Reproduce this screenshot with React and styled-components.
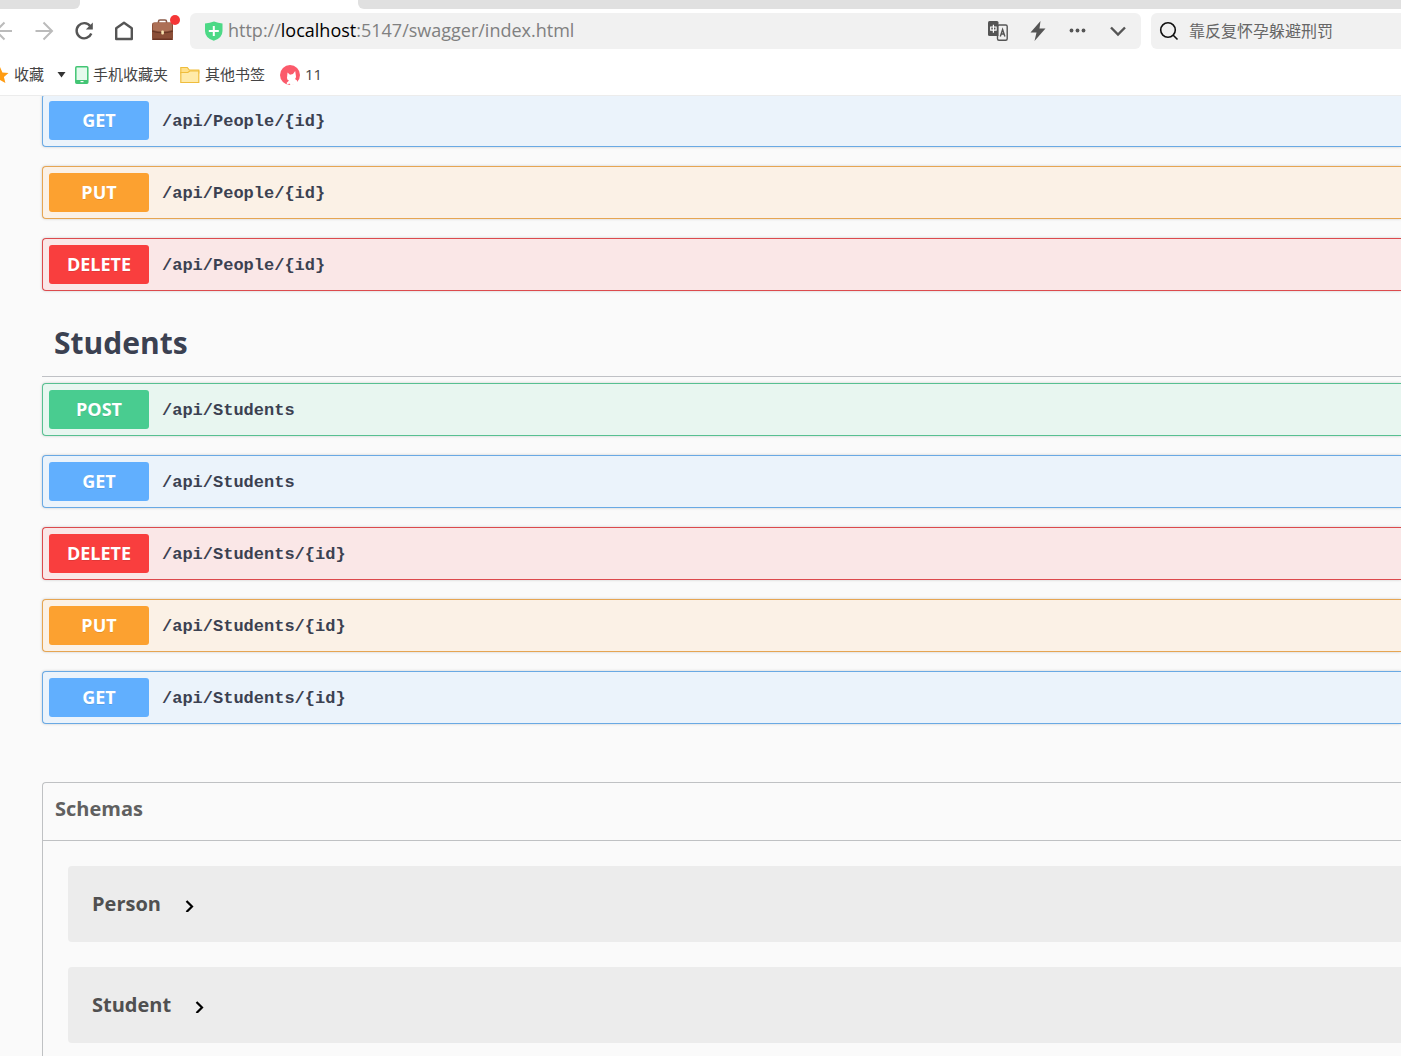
import React from "react";
import styled, { createGlobalStyle } from "styled-components";

const GlobalStyle = createGlobalStyle`
  * {
    box-sizing: border-box;
  }

  body {
    margin: 0;
    background-color: #fafafa;
    font-family: "Open Sans", "Noto Sans CJK SC", sans-serif;
    color: #3b4151;
  }

  button,
  input {
    font-family: inherit;
  }
`;

const Page = styled.div`
  display: flex;
  flex-direction: column;
  min-height: 100vh;
  overflow: hidden;
`;

// Browser chrome
const Browser = styled.header`
  position: relative;
  z-index: 1;
  background-color: #fff;
  border-bottom: 1px solid #ececec;
`;

const TabStrip = styled.div`
  display: flex;
  justify-content: space-between;
  height: 9px;
`;

const InactiveTab = styled.div`
  width: 80px;
  background-color: #e0e0e0;
  border-bottom-right-radius: 6px;
`;

const TabRest = styled.div`
  flex: 1;
  margin-left: 278px;
  background-color: #e0e0e0;
  border-bottom-left-radius: 6px;
`;

const Toolbar = styled.div`
  display: flex;
  align-items: center;
  padding-top: 4px;
`;

const Nav = styled.nav`
  display: flex;
  margin-left: -16px;
  margin-right: 6px;
`;

const IconButton = styled.button`
  display: flex;
  align-items: center;
  justify-content: center;
  width: 40px;
  height: 36px;
  padding: 0;
  border: none;
  background: none;
  color: ${(props) => props.$color || "#555"};
  cursor: pointer;
`;

const AddressBar = styled.div`
  display: flex;
  flex: 1;
  align-items: center;
  height: 36px;
  padding: 0 3px 0 14px;
  border-radius: 6px;
  background-color: #f1f1f1;
`;

const Url = styled.div`
  flex: 1;
  margin-left: 4px;
  padding-bottom: 2px;
  font-size: 18px;
  line-height: 24px;
  color: #808080;
  white-space: nowrap;
  outline: none;
`;

const Host = styled.span`
  color: #000;
`;

const SearchBar = styled.label`
  display: flex;
  align-items: center;
  gap: 10px;
  width: 250px;
  height: 36px;
  margin-left: 10px;
  padding-left: 8px;
  border-radius: 6px 0 0 6px;
  background-color: #f1f1f1;
`;

const SearchInput = styled.input`
  flex: 1;
  min-width: 0;
  padding: 0;
  border: none;
  outline: none;
  background: none;
  font-size: 16px;

  &::placeholder {
    color: #666;
  }
`;

const Bookmarks = styled.div`
  display: flex;
  align-items: center;
  height: 46px;
  padding-top: 5px;
`;

const Bookmark = styled.a`
  display: flex;
  align-items: center;
  gap: ${(props) => props.$gap || 5}px;
  margin-right: ${(props) => props.$after || 0}px;
  font-size: 15px;
  line-height: 20px;
  color: #444;
  text-decoration: none;
  white-space: nowrap;

  &:first-child {
    margin-left: -9px;
  }
`;

const BookmarkLabel = styled.span`
  padding-bottom: 2px;
`;

const MenuArrow = styled.button`
  display: flex;
  margin-right: 9px;
  padding: 0;
  border: none;
  background: none;
`;

// Swagger page
const Content = styled.main`
  display: flex;
  flex: 1;
  flex-direction: column;
  margin-top: -2px;
  padding-left: 42px;
`;

const Operations = styled.section`
  display: flex;
  flex-direction: column;
  gap: 19px;
`;

const colors = {
  GET: { main: "#61affe", border: "#69a9e4", background: "#ebf3fb" },
  PUT: { main: "#fca130", border: "#e6a552", background: "#fbf1e6" },
  DELETE: { main: "#f93e3e", border: "#dc4a4d", background: "#fae7e7" },
  POST: { main: "#49cc90", border: "#57c091", background: "#e8f6f0" },
};

const Operation = styled.button`
  display: flex;
  align-items: center;
  height: 53px;
  padding: 0 0 0 6px;
  border: 1px solid ${(props) => colors[props.$method].border};
  border-right: none;
  border-radius: 4px 0 0 4px;
  background-color: ${(props) => colors[props.$method].background};
  box-shadow: 0 0 3px rgba(0, 0, 0, 0.19);
  cursor: pointer;
`;

const Method = styled.span`
  width: 100px;
  border-radius: 3px;
  background-color: ${(props) => colors[props.$method].main};
  color: #fff;
  font-size: 18px;
  font-weight: 700;
  line-height: 39px;
  text-align: center;
  text-shadow: 0 1px 0 rgba(0, 0, 0, 0.1);
`;

const Path = styled.span`
  margin-left: 13px;
  padding-top: 2px;
  color: #3b4151;
  font-family: "Liberation Mono", monospace;
  font-size: 17px;
  font-weight: 600;
  line-height: 24px;
`;

const TagTitle = styled.h3`
  margin: 0 0 6px;
  padding: 30px 0 11px 12px;
  border-bottom: 1px solid #bfc1c5;
  font-size: 30px;
  font-weight: 700;
  line-height: 44px;
`;

const Schemas = styled.section`
  flex: 1;
  margin-top: 58px;
  border: 1px solid #bfc1c3;
  border-right: none;
  border-bottom: none;
  border-radius: 4px 0 0 0;
`;

const SchemasTitle = styled.h4`
  margin: 0;
  padding: 11px 12px 16px;
  border-bottom: 1px solid #bfc1c3;
  color: #606060;
  font-size: 20px;
  font-weight: 700;
  line-height: 30px;
`;

const ModelList = styled.div`
  display: flex;
  flex-direction: column;
  gap: 25px;
  padding: 25px 0 0 25px;
`;

const Model = styled.button`
  display: flex;
  align-items: center;
  gap: 24px;
  height: 76px;
  padding: 0 0 0 24px;
  border: none;
  border-radius: 4px 0 0 4px;
  background-color: #ececec;
  color: #505050;
  font-size: 20px;
  font-weight: 700;
  line-height: 30px;
  cursor: pointer;
`;

const BackIcon = () => (
  <svg width="20" height="20" viewBox="0 0 20 20" fill="none" stroke="currentColor" strokeWidth="2">
    <path d="M18 10H2M10.500 1.500L2 10l8.500 8.500" />
  </svg>
);

const ForwardIcon = () => (
  <svg width="20" height="20" viewBox="0 0 20 20" fill="none" stroke="currentColor" strokeWidth="2">
    <path d="M1.500 10H18M9.500 1.500L18 10l-8.500 8.500" />
  </svg>
);

const ReloadIcon = () => (
  <svg width="20" height="20" viewBox="0 0 20 20" fill="none" stroke="currentColor" strokeWidth="2.4">
    <path d="M16.300 5.200A7.600 7.600 0 1 0 17.300 12.500" />
    <path d="M18.800 1.500V8.500H11.800z" fill="currentColor" stroke="none" />
  </svg>
);

const HomeIcon = () => (
  <svg width="20" height="20" viewBox="0 0 20 20" fill="none" stroke="currentColor" strokeWidth="2.4" strokeLinejoin="round">
    <path d="M2.200 7.200L10 1.800l7.800 5.400V18H2.200z" />
  </svg>
);

const BriefcaseIcon = () => (
  <svg width="32" height="32" viewBox="-1 0 32 32">
    <path d="M9.500 8V6.500q0-1.500 1.500-1.500h5q1.500 0 1.500 1.500V8" fill="none" stroke="#8a5a48" strokeWidth="1.600" />
    <rect x="3" y="7.500" width="21" height="17.500" rx="2" fill="#8b4e37" />
    <path d="M4 15V9.500q0-2 2-2h15q2 0 2 2V15q-9.500 3-19 0z" fill="#ad7056" />
    <path d="M3 15.500q10.500 3 21 0v1.200q-10.500 3-21 0z" fill="#6a3826" />
    <rect x="3" y="23.500" width="21" height="1.500" rx="1" fill="#6c3524" />
    <rect x="12.300" y="15.500" width="2.600" height="4" rx="1" fill="#f7e0ae" />
    <circle cx="26" cy="5" r="5" fill="#f53636" />
  </svg>
);

const ShieldIcon = () => (
  <svg width="20" height="20" viewBox="0 0 20 20">
    <path d="M1 2.500Q6 2 10 .5q4 1.500 8.500 2V10q0 7-8.700 9.800Q1 17 1 10z" fill="#4cd986" />
    <path d="M9.800 5v10M4.800 10h10" stroke="#fff" strokeWidth="2" />
  </svg>
);

const TranslateIcon = () => (
  <svg width="20" height="20" viewBox="0 0 20 20" fill="none" stroke="currentColor">
    <rect x="9.500" y="4" width="9.700" height="15.200" rx="1.500" strokeWidth="1.400" />
    <path d="M1.500 0h7.500q1.500 0 1.500 1.500V15h-9Q0 15 0 13.500v-12Q0 0 1.500 0z" fill="currentColor" stroke="none" />
    <path d="M2.700 6h5.400v3.200H2.700zM5.400 3.800v8" stroke="#fff" strokeWidth="1.200" />
    <path d="M12.300 15.500L14.600 8.500l2.300 7M13 13h3.200" strokeWidth="1.400" />
  </svg>
);

const BoltIcon = () => (
  <svg width="16" height="20" viewBox="0 0 16 20" fill="currentColor">
    <path d="M10.500 0L.5 11.500h6L4.500 20 15.500 7.500H9.500z" />
  </svg>
);

const MoreIcon = () => (
  <svg width="18" height="6" viewBox="0 0 18 6" fill="currentColor">
    <circle cx="2.500" cy="2.500" r="1.900" />
    <circle cx="8.500" cy="2.500" r="1.900" />
    <circle cx="14.500" cy="2.500" r="1.900" />
  </svg>
);

const ChevronDownIcon = () => (
  <svg width="16" height="12" viewBox="0 0 16 12" fill="none" stroke="currentColor" strokeWidth="2.400">
    <path d="M1 2.500l7 7 7-7" />
  </svg>
);

const SearchIcon = () => (
  <svg width="20" height="20" viewBox="0 0 20 20" fill="none" stroke="#111" strokeWidth="1.600">
    <circle cx="9" cy="9" r="7.300" />
    <path d="M14 14l4.500 4.500" />
  </svg>
);

const StarIcon = () => (
  <svg width="18" height="18" viewBox="0 0 18 18" fill="#ff9c13">
    <path d="M9 1l2.400 5.500 6.100.6-4.600 4 1.500 6L9 14l-5.400 3.100 1.500-6-4.600-4 6.100-.6z" />
  </svg>
);

const PhoneIcon = () => (
  <svg width="14" height="18" viewBox="0 0 14 18">
    <rect x=".8" y=".8" width="12" height="16.400" rx="1" fill="#e5faed" stroke="#43c574" strokeWidth="1.500" />
    <path d="M.8 14h12v3.200H.8z" fill="#43c574" />
    <rect x="5.500" y="15" width="3" height="1.200" fill="#fff" />
  </svg>
);

const FolderIcon = () => (
  <svg width="20" height="18" viewBox="0 0 20 18" stroke="#efbd3c" strokeWidth="1.200">
    <path d="M.8 1.500h6.500l2 2.500h9.500v3H.8z" fill="#ffe08a" />
    <path d="M.8 6.500h7l2-1.500h9v11.500H.8z" fill="#ffeaa8" />
  </svg>
);

const CatIcon = () => (
  <svg width="20" height="20" viewBox="0 0 20 20">
    <circle cx="10" cy="10" r="10" fill="#fb5a6b" />
    <path d="M7.500 7.500l2.500 2.200 3-.7 2.200-3 .8 5.500q0 1.700-1 2.500l2 1.500.5 2.700Q14 20.200 10.500 20l-1.200-1.500-1.800 1-1-1.500 2.500-2.500q-2-.5-2-2.500z" fill="#fff" />
  </svg>
);

const ArrowIcon = () => (
  <svg width="10" height="16" viewBox="0 0 10 16" fill="none" stroke="#000" strokeWidth="2.200">
    <path d="M1.500 5l5.500 5.500L1.500 16" />
  </svg>
);

const OperationList = ({ items }) => (
  <Operations>
    {items.map(({ method, path }) => (
      <Operation key={method + path} $method={method} type="button">
        <Method $method={method}>{method}</Method>
        <Path>{path}</Path>
      </Operation>
    ))}
  </Operations>
);

const people = [
  { method: "GET", path: "/api/People/{id}" },
  { method: "PUT", path: "/api/People/{id}" },
  { method: "DELETE", path: "/api/People/{id}" },
];

const students = [
  { method: "POST", path: "/api/Students" },
  { method: "GET", path: "/api/Students" },
  { method: "DELETE", path: "/api/Students/{id}" },
  { method: "PUT", path: "/api/Students/{id}" },
  { method: "GET", path: "/api/Students/{id}" },
];

const models = ["Person", "Student"];

const App = () => {
  return (
    <Page>
      <GlobalStyle />
      <Browser>
        <TabStrip>
          <InactiveTab />
          <TabRest />
        </TabStrip>
        <Toolbar>
          <Nav>
            <IconButton aria-label="后退" $color="#bbb"><BackIcon /></IconButton>
            <IconButton aria-label="前进" $color="#bbb"><ForwardIcon /></IconButton>
            <IconButton aria-label="刷新"><ReloadIcon /></IconButton>
            <IconButton aria-label="主页"><HomeIcon /></IconButton>
            <IconButton aria-label="工具箱"><BriefcaseIcon /></IconButton>
          </Nav>
          <AddressBar>
            <ShieldIcon />
            <Url role="textbox" aria-label="地址" tabIndex={0}>
              http://<Host>localhost</Host>:5147/swagger/index.html
            </Url>
            <IconButton aria-label="翻译"><TranslateIcon /></IconButton>
            <IconButton aria-label="极速模式"><BoltIcon /></IconButton>
            <IconButton aria-label="更多"><MoreIcon /></IconButton>
            <IconButton aria-label="展开"><ChevronDownIcon /></IconButton>
          </AddressBar>
          <SearchBar>
            <SearchIcon />
            <SearchInput type="text" aria-label="搜索" placeholder="靠反复怀孕躲避刑罚" />
          </SearchBar>
        </Toolbar>
        <Bookmarks>
          <Bookmark href="#" $after={13}>
            <StarIcon />
            <BookmarkLabel>收藏</BookmarkLabel>
          </Bookmark>
          <MenuArrow aria-label="收藏菜单">
            <svg width="9" height="6" viewBox="0 0 9 6" fill="#333"><path d="M.5 0h8L4.500 5.500z" /></svg>
          </MenuArrow>
          <Bookmark href="#" $gap={4} $after={12}>
            <PhoneIcon />
            <BookmarkLabel>手机收藏夹</BookmarkLabel>
          </Bookmark>
          <Bookmark href="#" $after={15}>
            <FolderIcon />
            <BookmarkLabel>其他书签</BookmarkLabel>
          </Bookmark>
          <Bookmark href="#">
            <CatIcon />
            <BookmarkLabel>11</BookmarkLabel>
          </Bookmark>
        </Bookmarks>
      </Browser>

      <Content>
        <OperationList items={people} />
        <TagTitle>Students</TagTitle>
        <OperationList items={students} />
        <Schemas>
          <SchemasTitle>Schemas</SchemasTitle>
          <ModelList>
            {models.map((name) => (
              <Model key={name} type="button">
                {name}
                <ArrowIcon />
              </Model>
            ))}
          </ModelList>
        </Schemas>
      </Content>
    </Page>
  );
};

export default App;
